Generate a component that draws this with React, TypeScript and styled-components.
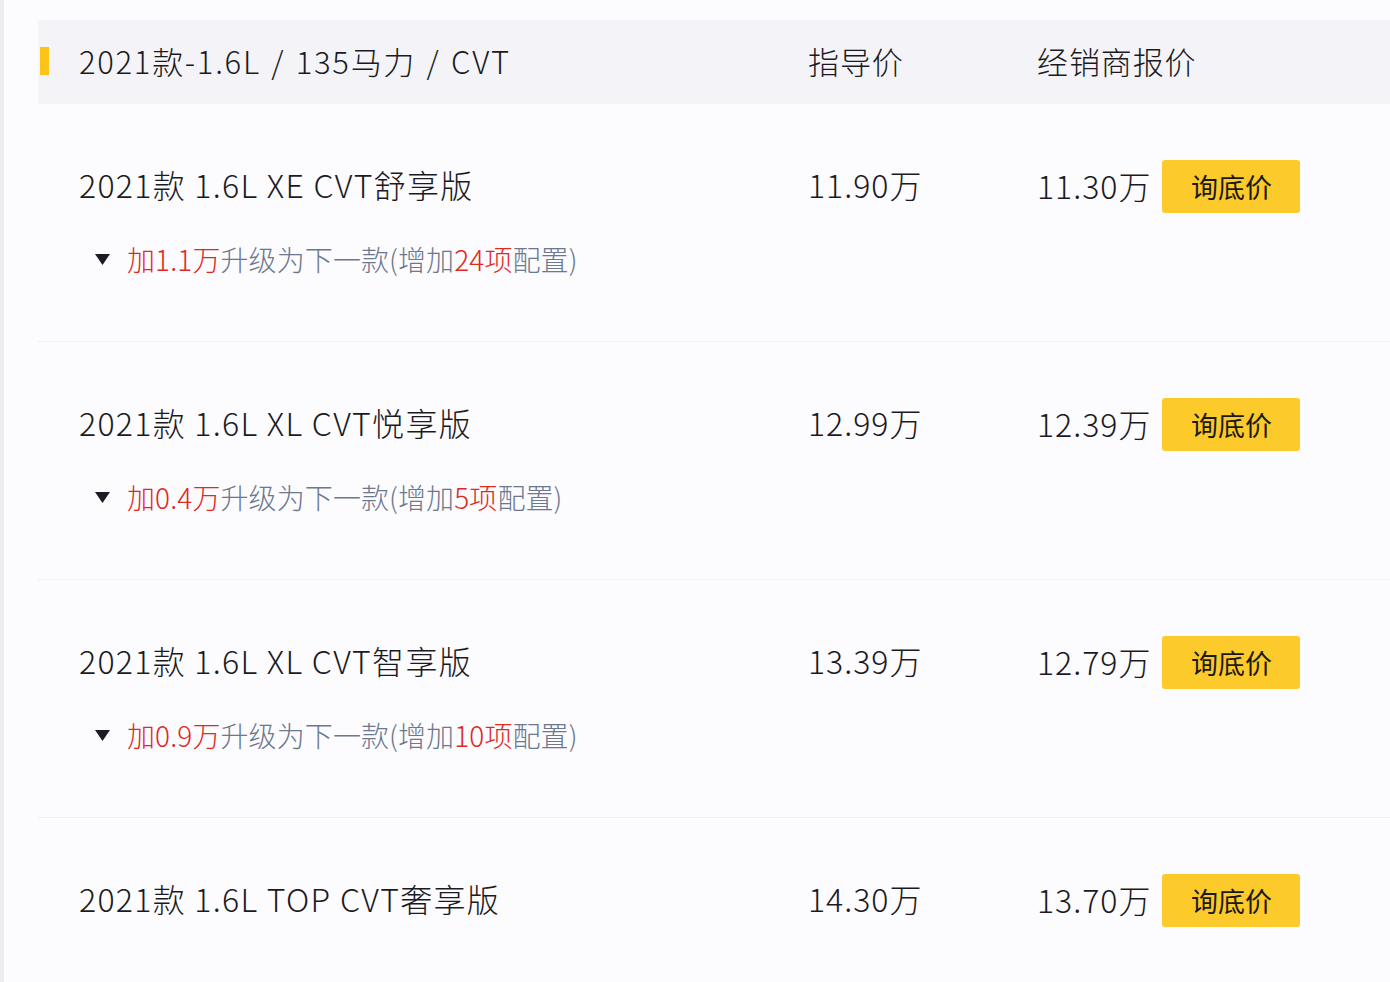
import styled, { createGlobalStyle } from "styled-components";

const GlobalStyle = createGlobalStyle`
  html, body {
    margin: 0;
    padding: 0;
    background: #fcfbfe;
  }
  body {
    font-family: "Noto Sans CJK SC", "Noto Sans", "Liberation Sans", sans-serif;
    font-weight: 300;
    color: #1b1a22;
  }
`;

const Page = styled.div`
  height: 982px;
  overflow: hidden;
  border-left: 4px solid #ececf1;
  padding: 20px 0 0 34px;
  box-sizing: border-box;
`;

const Grid = styled.div`
  display: grid;
  grid-template-columns: 770px 229px 1fr;
`;

const Header = styled(Grid)`
  height: 84px;
  background: #f4f4f8;
  align-items: center;
  font-size: 31px;
  line-height: 40px;
  letter-spacing: 0.9px;
  padding-bottom: 2px;
  box-sizing: border-box;
`;

const GroupTitle = styled.div`
  display: flex;
  align-items: center;
  gap: 30px;
  padding-left: 2px;
  letter-spacing: 1.7px;
  word-spacing: 2px;

  &::before {
    content: "";
    width: 9px;
    height: 28px;
    background: #fcc419;
  }
`;

const Row = styled(Grid)<{ last?: boolean }>`
  height: 238px;
  border-bottom: ${({ last }) => (last ? "none" : "1px solid #f0eff4")};
  padding-top: 54px;
  box-sizing: border-box;
  align-items: start;
`;

const NameCell = styled.div`
  padding-left: 41px;
`;

const Name = styled.div`
  font-size: 32px;
  line-height: 53px;
  letter-spacing: 1.3px;
`;

const Upgrade = styled.div`
  display: flex;
  align-items: center;
  margin-top: 30px;
  padding-left: 16px;
  font-size: 28px;
  line-height: 36px;
  color: #6c788d;
  letter-spacing: 0.1px;

  svg {
    margin-right: 17px;
  }
`;

const Red = styled.span`
  color: #e0291f;
`;

const Price = styled.div`
  display: flex;
  align-items: center;
  gap: 11px;
  font-size: 32px;
  line-height: 53px;
  letter-spacing: 1px;
`;

const AskButton = styled.button`
  width: 138px;
  height: 53px;
  margin-top: 2px;
  border: none;
  border-radius: 3px;
  background: #fdca2c;
  color: #1c1a15;
  font-family: inherit;
  font-weight: 400;
  font-size: 27px;
  letter-spacing: 0;
  padding: 0;
  cursor: pointer;
`;

interface Trim {
  name: string;
  guide: string;
  dealer: string;
  upgrade?: { price: string; items: string };
}

const trims: Trim[] = [
  { name: "2021款 1.6L XE CVT舒享版", guide: "11.90万", dealer: "11.30万", upgrade: { price: "1.1", items: "24" } },
  { name: "2021款 1.6L XL CVT悦享版", guide: "12.99万", dealer: "12.39万", upgrade: { price: "0.4", items: "5" } },
  { name: "2021款 1.6L XL CVT智享版", guide: "13.39万", dealer: "12.79万", upgrade: { price: "0.9", items: "10" } },
  { name: "2021款 1.6L TOP CVT奢享版", guide: "14.30万", dealer: "13.70万" },
];

const Caret = () => (
  <svg width="15" height="11" viewBox="0 0 15 11">
    <path d="M0 0 H15 L7.5 11 Z" fill="#1c1b24" />
  </svg>
);

export default function App() {
  return (
    <>
      <GlobalStyle />
      <Page>
        <Header>
          <GroupTitle>2021款-1.6L / 135马力 / CVT</GroupTitle>
          <div>指导价</div>
          <div>经销商报价</div>
        </Header>
        {trims.map((t, i) => (
          <Row key={t.name} last={i === trims.length - 1}>
            <NameCell>
              <Name>{t.name}</Name>
              {t.upgrade && (
                <Upgrade>
                  <Caret />
                  <Red>加{t.upgrade.price}万</Red>
                  升级为下一款(增加
                  <Red>{t.upgrade.items}项</Red>
                  配置)
                </Upgrade>
              )}
            </NameCell>
            <Price>{t.guide}</Price>
            <Price>
              {t.dealer}
              <AskButton>询底价</AskButton>
            </Price>
          </Row>
        ))}
      </Page>
    </>
  );
}
